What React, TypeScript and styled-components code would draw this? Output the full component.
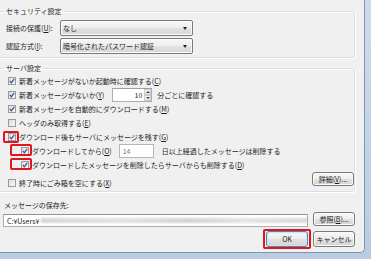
import React from 'react';
import styled, { createGlobalStyle } from 'styled-components';

const GlobalStyle = createGlobalStyle`
  html, body {
    margin: 0;
    padding: 0;
  }
  body {
    background: #c4d6ea;
    font-family: "Noto Sans CJK JP", "Noto Sans", sans-serif;
  }
`;

const Frame = styled.div`
  width: 371px;
  height: 259px;
  overflow: hidden;
  background: linear-gradient(180deg, #cddcec, #b8cde3);
`;

const Panel = styled.div`
  width: 365px;
  height: 253px;
  box-sizing: border-box;
  display: flex;
  flex-direction: column;
  padding-right: 9px;
  background: #f0f0f0;
  border-right: 1px solid #8494a8;
  border-bottom: 1px solid #8494a8;
  border-bottom-right-radius: 5px;
  overflow: hidden;
  font-size: 7px;
  line-height: 10px;
  color: #1c1c1c;
`;

const Group = styled.fieldset<{ $top: number; $padTop: number; $padBottom: number }>`
  margin: ${(p) => p.$top}px 0 0 -2px;
  padding: ${(p) => p.$padTop}px 0 ${(p) => p.$padBottom}px 7px;
  border: 1px solid #d5dfe5;
  border-radius: 3px;
  box-shadow: inset 1px 1px 0 #fff, 1px 1px 0 #fff;
  min-inline-size: 0;
`;

const Legend = styled.legend`
  margin-left: -2px;
  padding: 0 2px;
  line-height: 10px;
`;

const FieldGrid = styled.div`
  display: grid;
  grid-template-columns: 54px 133px;
  row-gap: 2px;
  align-items: center;
`;

const Combo = styled.div`
  height: 16px;
  box-sizing: border-box;
  display: flex;
  align-items: center;
  justify-content: space-between;
  padding: 0 5px 0 2px;
  border: 1px solid #7a7a7a;
  border-radius: 2px;
  background: linear-gradient(#f6f6f6, #eeeeee 50%, #e2e2e2 51%, #d6d6d6);
  box-shadow: inset 0 0 0 1px #fbfbfb;
`;

const Arrow = styled.span`
  width: 0;
  height: 0;
  border-left: 2.5px solid transparent;
  border-right: 2.5px solid transparent;
  border-top: 3px solid #222;
`;

const Row = styled.div<{ $indent?: number }>`
  display: flex;
  align-items: center;
  height: 14px;
  padding-left: ${(p) => p.$indent ?? 2}px;
  white-space: nowrap;
`;

const Box = styled.span`
  position: relative;
  flex: none;
  width: 8px;
  height: 8px;
  box-sizing: border-box;
  display: flex;
  align-items: center;
  justify-content: center;
  margin-right: 3px;
  border: 1px solid #9a9b9b;
  background: linear-gradient(135deg, #dcdcdc, #fafafa);
`;

const Highlight = styled.span<{ $l: number; $t: number; $w: number; $h: number }>`
  position: absolute;
  left: ${(p) => p.$l}px;
  top: ${(p) => p.$t}px;
  width: ${(p) => p.$w}px;
  height: ${(p) => p.$h}px;
  box-sizing: border-box;
  border: 2px solid #e2141f;
  border-radius: 2px;
  pointer-events: none;
`;

const Spinner = styled.div`
  display: flex;
  width: 40px;
  height: 14px;
  box-sizing: border-box;
  margin: 0 5px 0 8px;
  border: 1px solid #abadb3;
  border-top-color: #9a9ea6;
  background: #fff;
`;

const SpinValue = styled.span`
  flex: 1;
  text-align: right;
  padding-right: 2px;
  line-height: 12px;
`;

const SpinButtons = styled.div`
  display: flex;
  flex-direction: column;
  width: 7px;
`;

const SpinButton = styled.span`
  flex: 1;
  display: flex;
  align-items: center;
  justify-content: center;
  border: 1px solid #c8cacd;
  background: linear-gradient(#f7f7f7, #e4e4e4);
`;

const NumberField = styled.div`
  width: 35px;
  height: 14px;
  box-sizing: border-box;
  margin: 0 8px 0 7px;
  padding-left: 3px;
  border: 1px solid #b3b6ba;
  background: #fff;
  color: #7a7a7a;
  line-height: 12px;
`;

const LastRow = styled.div`
  display: flex;
  justify-content: space-between;
  align-items: flex-start;
`;

const LastCheck = styled.div`
  margin-top: 4px;
`;

const Button = styled.button<{ $h?: number; $primary?: boolean }>`
  position: relative;
  flex: none;
  width: 42px;
  height: ${(p) => p.$h ?? 14}px;
  box-sizing: border-box;
  padding: 0;
  font: inherit;
  color: #1c1c1c;
  border: 1px solid ${(p) => (p.$primary ? '#4d86b5' : '#7a7a7a')};
  border-radius: 3px;
  background: linear-gradient(#f6f6f6, #eeeeee 50%, #e1e1e1 51%, #d4d4d4);
  box-shadow: inset 0 0 0 1px ${(p) => (p.$primary ? '#c9e6f8' : '#fbfbfb')};
`;

const StorageLabel = styled.div`
  margin-top: 8px;
  padding-left: 4px;
`;

const PathRow = styled.div`
  display: flex;
  align-items: flex-start;
  gap: 5px;
  margin-top: 2px;
`;

const PathField = styled.div`
  flex: 1;
  height: 13px;
  box-sizing: border-box;
  display: flex;
  align-items: center;
  margin: 2px 0 0 3px;
  padding-left: 3px;
  border: 1px solid #abadb3;
  border-top-color: #8f949c;
  background: #fff;
  overflow: hidden;
  white-space: nowrap;
`;

const Redacted = styled.span`
  flex: none;
  width: 270px;
  height: 5px;
  margin-left: 2px;
  background: linear-gradient(90deg, #d6d6d6, #e2e2e2 30%, #d2d2d2 55%, #e4e4e4 75%, #d8d8d8);
  filter: blur(1px);
`;

const Footer = styled.div`
  display: flex;
  justify-content: flex-end;
  gap: 5px;
  margin-top: 4px;
`;

function Check() {
  return (
    <svg width="6" height="6" viewBox="0 0 6 6">
      <path d="M0.8 3 L2.4 4.7 L5.3 0.9" fill="none" stroke="#3a5588" strokeWidth="1.2" />
    </svg>
  );
}

function SpinArrow({ up }: { up?: boolean }) {
  return (
    <svg width="4" height="2" viewBox="0 0 4 2">
      <path d={up ? 'M0 2 L2 0 L4 2 Z' : 'M0 0 L2 2 L4 0 Z'} fill="#444" />
    </svg>
  );
}

type Mark = { l: number; t: number; w: number; h: number };

function CheckItem({
  checked,
  indent,
  mark,
  children,
}: {
  checked?: boolean;
  indent?: number;
  mark?: Mark;
  children: React.ReactNode;
}) {
  return (
    <Row $indent={indent}>
      <Box>
        {checked && <Check />}
        {mark && <Highlight $l={mark.l} $t={mark.t} $w={mark.w} $h={mark.h} />}
      </Box>
      {children}
    </Row>
  );
}

export default function App() {
  return (
    <Frame>
      <GlobalStyle />
      <Panel>
        <Group $top={6} $padTop={4} $padBottom={3}>
          <Legend>セキュリティ設定</Legend>
          <FieldGrid>
            <span>
              接続の保護(<u>U</u>):
            </span>
            <Combo>
              なし
              <Arrow />
            </Combo>
            <span>
              認証方式(<u>I</u>):
            </span>
            <Combo>
              暗号化されたパスワード認証
              <Arrow />
            </Combo>
          </FieldGrid>
        </Group>

        <Group $top={5} $padTop={1} $padBottom={1}>
          <Legend>サーバ設定</Legend>
          <CheckItem checked>
            新着メッセージがないか起動時に確認する(<u>C</u>)
          </CheckItem>
          <CheckItem checked>
            新着メッセージがないか(<u>Y</u>)
            <Spinner>
              <SpinValue>10</SpinValue>
              <SpinButtons>
                <SpinButton>
                  <SpinArrow up />
                </SpinButton>
                <SpinButton>
                  <SpinArrow />
                </SpinButton>
              </SpinButtons>
            </Spinner>
            分ごとに確認する
          </CheckItem>
          <CheckItem checked>
            新着メッセージを自動的にダウンロードする(<u>M</u>)
          </CheckItem>
          <CheckItem>
            ヘッダのみ取得する(<u>E</u>)
          </CheckItem>
          <CheckItem checked mark={{ l: -6, t: -3, w: 16, h: 12 }}>
            ダウンロード後もサーバにメッセージを残す(<u>G</u>)
          </CheckItem>
          <CheckItem checked indent={15} mark={{ l: -12, t: -4, w: 22, h: 12 }}>
            ダウンロードしてから(<u>O</u>)
            <NumberField>14</NumberField>
            日以上経過したメッセージは削除する
          </CheckItem>
          <CheckItem checked indent={15} mark={{ l: -12, t: -4, w: 22, h: 12 }}>
            ダウンロードしたメッセージを削除したらサーバからも削除する(<u>D</u>)
          </CheckItem>
          <LastRow>
            <LastCheck>
              <CheckItem>
                終了時にごみ箱を空にする(<u>X</u>)
              </CheckItem>
            </LastCheck>
            <Button>
              詳細(<u>V</u>)...
            </Button>
          </LastRow>
        </Group>

        <StorageLabel>メッセージの保存先:</StorageLabel>
        <PathRow>
          <PathField>
            C:¥Users¥
            <Redacted />
          </PathField>
          <Button>
            参照(<u>B</u>)...
          </Button>
        </PathRow>

        <Footer>
          <Button $h={16} $primary>
            OK
            <Highlight $l={-4} $t={-3} $w={48} $h={20} />
          </Button>
          <Button $h={16}>キャンセル</Button>
        </Footer>
      </Panel>
    </Frame>
  );
}
